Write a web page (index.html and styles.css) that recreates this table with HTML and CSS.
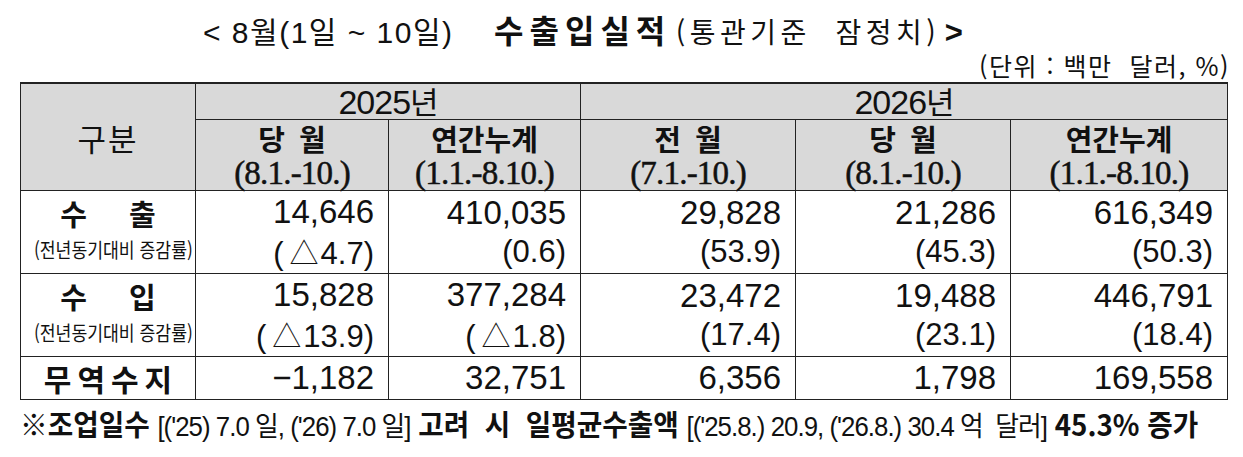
FILE: index.html
```html
<!DOCTYPE html>
<html lang="ko">
<head>
<meta charset="utf-8">
<title>8월 수출입실적</title>
<link rel="stylesheet" href="styles.css">
</head>
<body>
<div class="page">
  <div class="title">
    <span class="t1">&lt; 8월(1일 ~ 10일)</span>
    <span class="t2">수출입실적</span>
    <span class="t3">(통관기준&nbsp; 잠정치)</span>
    <span class="t4">&gt;</span>
  </div>
  <div class="unit">(단위 : 백만&nbsp; 달러, %)</div>
  <table class="tbl">
    <colgroup>
      <col class="c0"><col class="c1"><col class="c2"><col class="c3"><col class="c4"><col class="c5">
    </colgroup>
    <tr class="h1">
      <th rowspan="2" class="gubun">구분</th>
      <th colspan="2" class="year">2025<span class="yk">년</span></th>
      <th colspan="3" class="year">2026<span class="yk">년</span></th>
    </tr>
    <tr class="h2">
      <th><div class="hk">당 월</div><div class="hd">(8.1.-10.)</div></th>
      <th><div class="hk">연간누계</div><div class="hd">(1.1.-8.10.)</div></th>
      <th><div class="hk">전 월</div><div class="hd">(7.1.-10.)</div></th>
      <th><div class="hk">당 월</div><div class="hd">(8.1.-10.)</div></th>
      <th><div class="hk">연간누계</div><div class="hd">(1.1.-8.10.)</div></th>
    </tr>
    <tr class="data">
      <td class="lab"><div class="lk"><span>수</span><span>출</span></div><div class="ls"><span>(전년동기대비 증감률)</span></div></td>
      <td class="num"><div class="n1">14,646</div><div class="n2">(<span class="tri">△</span>4.7)</div></td>
      <td class="num"><div class="n1">410,035</div><div class="n2">(0.6)</div></td>
      <td class="num"><div class="n1">29,828</div><div class="n2">(53.9)</div></td>
      <td class="num"><div class="n1">21,286</div><div class="n2">(45.3)</div></td>
      <td class="num"><div class="n1">616,349</div><div class="n2">(50.3)</div></td>
    </tr>
    <tr class="data">
      <td class="lab"><div class="lk"><span>수</span><span>입</span></div><div class="ls"><span>(전년동기대비 증감률)</span></div></td>
      <td class="num"><div class="n1">15,828</div><div class="n2">(<span class="tri">△</span>13.9)</div></td>
      <td class="num"><div class="n1">377,284</div><div class="n2">(<span class="tri">△</span>1.8)</div></td>
      <td class="num"><div class="n1">23,472</div><div class="n2">(17.4)</div></td>
      <td class="num"><div class="n1">19,488</div><div class="n2">(23.1)</div></td>
      <td class="num"><div class="n1">446,791</div><div class="n2">(18.4)</div></td>
    </tr>
    <tr class="bal">
      <td class="lab"><div class="lk wide">무역수지</div></td>
      <td class="num"><div class="n1">−1,182</div></td>
      <td class="num"><div class="n1">32,751</div></td>
      <td class="num"><div class="n1">6,356</div></td>
      <td class="num"><div class="n1">1,798</div></td>
      <td class="num"><div class="n1">169,558</div></td>
    </tr>
  </table>
  <div class="note"><div class="note-in"><b>※조업일수</b> <span class="nn">[('25) 7.0 일, ('26) 7.0 일]</span> <b>고려&nbsp; 시&nbsp; 일평균수출액</b> <span class="nn">[('25.8.) 20.9, ('26.8.) 30.4 억&nbsp; 달러]</span> <b>45.3% 증가</b></div></div>
</div>
</body>
</html>
```

FILE: styles.css
```css
html, body {
  margin: 0;
  padding: 0;
  background: #ffffff;
}
body {
  font-family: "Noto Sans CJK KR", "Liberation Sans", sans-serif;
  color: #111111;
}
.page {
  width: 1243px;
  padding: 0 0 0 20px;
  box-sizing: border-box;
}
.title {
  height: 50px;
  padding: 10px 0 0 183px;
  box-sizing: border-box;
  white-space: nowrap;
  line-height: 38px;
}
.t1 {
  font-family: "Liberation Sans", "Noto Sans CJK KR", sans-serif;
  font-size: 30px;
  letter-spacing: 1.5px;
}
.t2 {
  font-size: 32px;
  font-weight: 700;
  letter-spacing: 6px;
  margin-left: 36px;
}
.t3 {
  font-size: 28px;
  letter-spacing: 4.5px;
}
.t4 {
  font-family: "Liberation Sans", sans-serif;
  font-size: 31px;
  font-weight: 700;
}
.unit {
  width: 1210px;
  text-align: right;
  font-size: 25px;
  line-height: 30px;
  height: 32px;
  letter-spacing: 1.5px;
}
.tbl {
  border-collapse: collapse;
  width: 1207px;
  table-layout: fixed;
  border-top: 2px solid #222;
}
.c0 { width: 175px; }
.c1 { width: 193px; }
.c2 { width: 192px; }
.c3 { width: 215px; }
.c4 { width: 215px; }
.c5 { width: 217px; }
.tbl th, .tbl td {
  border: 1px solid #222;
  padding: 0;
}
.tbl th {
  background: #d9d9d9;
  font-weight: 400;
  text-align: center;
}
.h1 th { height: 34px; }
.h2 th { height: 70px; }
.gubun {
  font-size: 31px;
  letter-spacing: 2px;
}
.year {
  font-family: "Liberation Sans", "Noto Sans CJK KR", sans-serif;
  font-size: 34px;
  line-height: 34px;
  letter-spacing: -1px;
}
.yk {
  font-family: "Noto Sans CJK KR", sans-serif;
  font-size: 31px;
}
.hk {
  font-size: 29px;
  font-weight: 700;
  line-height: 35px;
  height: 35px;
  word-spacing: 6px;
}
.hd {
  font-family: "Liberation Serif", serif;
  font-size: 33px;
  line-height: 34px;
  height: 34px;
  letter-spacing: -0.8px;
  -webkit-text-stroke: 0.5px #111;
}
.data td { height: 82px; }
.bal td { height: 42px; }
.lab {
  text-align: center;
}
.lk {
  display: flex;
  justify-content: center;
  gap: 42px;
  font-size: 29px;
  font-weight: 700;
  line-height: 40px;
}
.lk.wide {
  gap: 0;
  letter-spacing: 6px;
  padding-left: 6px;
  font-size: 30px;
}
.ls {
  height: 38px;
  line-height: 34px;
  font-size: 20px;
  white-space: nowrap;
}
.ls span {
  display: inline-block;
  transform: scaleX(0.86);
}
.num {
  text-align: right;
  padding-right: 14px !important;
  font-family: "Liberation Sans", "Noto Sans CJK KR", sans-serif;
}
.n1 {
  font-size: 33px;
  line-height: 40px;
}
.n2 {
  font-size: 31px;
  line-height: 38px;
  font-weight: 300;
}
.tri {
  font-family: "Noto Sans CJK KR", sans-serif;
  font-size: 29px;
  font-weight: 300;
  padding: 0 2px 0 6px;
}
.note {
  padding-top: 3px;
  white-space: nowrap;
}
.note-in {
  display: inline-block;
  font-size: 29px;
  line-height: 40px;
  transform-origin: left center;
  transform: scaleX(0.955);
}
.note-in b {
  font-weight: 700;
}
.nn {
  font-family: "Liberation Sans", "Noto Sans CJK KR", sans-serif;
  font-size: 27px;
  letter-spacing: -1px;
}
```
